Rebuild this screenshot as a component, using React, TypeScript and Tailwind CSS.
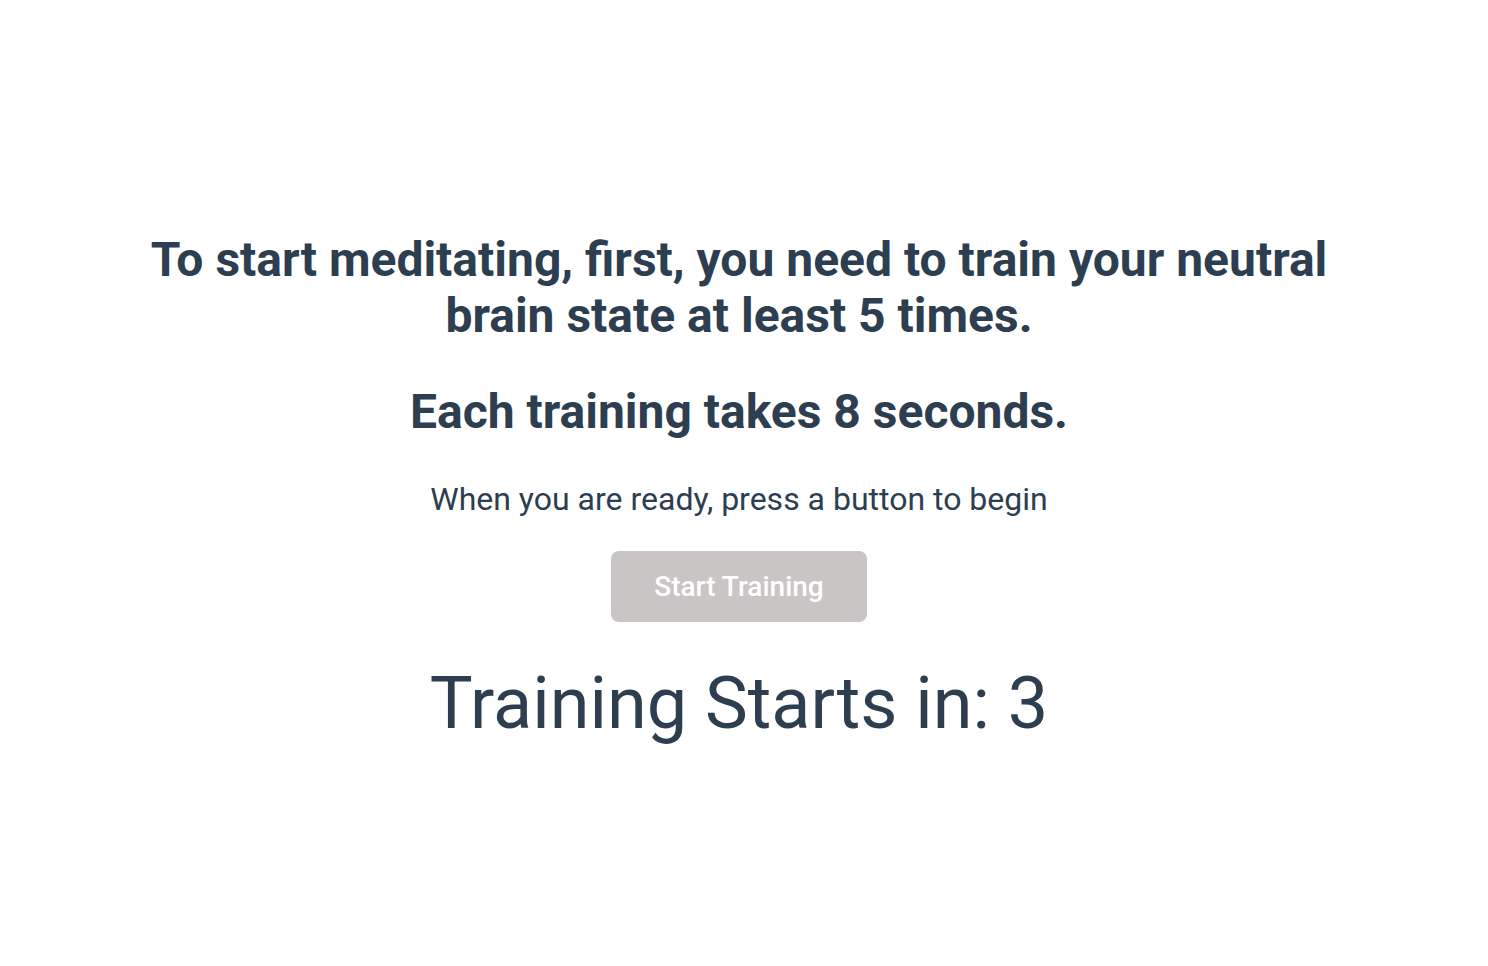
const App = () => {
  return (
    <div className="min-h-screen bg-white flex flex-col items-center text-center text-[#2c3e50] font-['Roboto',sans-serif] pl-8 pr-[42px] pt-[232px]">
      <h1 className="text-[48px] leading-[56px] font-bold max-w-[1200px]">
        To start meditating, first, you need to train your neutral brain state at least 5 times.
      </h1>
      <h2 className="mt-10 text-[48px] leading-[56px] font-bold">Each training takes 8 seconds.</h2>
      <p className="mt-[39px] text-[32px] leading-10">When you are ready, press a button to begin</p>
      <button className="mt-8 w-[256px] h-[71px] rounded-lg bg-[#c9c5c4] text-white text-[28px] font-medium">
        Start Training
      </button>
      <div className="mt-8 text-[72px] leading-[100px]">Training Starts in: 3</div>
    </div>
  );
};

export default App;
